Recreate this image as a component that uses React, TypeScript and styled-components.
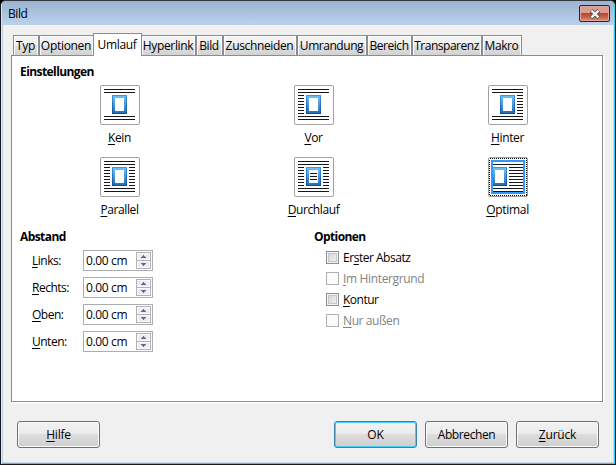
import React from 'react';
import styled, { createGlobalStyle, css } from 'styled-components';

const Global = createGlobalStyle`
  * { box-sizing: border-box; }
  html, body { margin: 0; width: 616px; height: 465px; overflow: hidden; background: #000; }
  body { font: 12px/16px "Open Sans", "Noto Sans", sans-serif; color: #000; }
  button { font: inherit; color: inherit; padding: 0; margin: 0; }
`;

const Window = styled.main`
  display: flex;
  flex-direction: column;
  width: 616px;
  height: 465px;
  border: 1px solid #17171c;
  border-top-color: #36363e;
  border-radius: 6px 6px 0 0;
  box-shadow: inset 1px 0 #d8e9fa, inset -1px -1px #30cde9, inset 2px 0 #b9d1ea, inset -2px -2px #c6dced;
  background: #f0f0f0;
  overflow: hidden;
`;
const TitleBar = styled.header`
  display: flex;
  justify-content: space-between;
  flex: none;
  height: 24px;
  padding: 4px 4px 0 7px;
  border-right: 1px solid #45cdec;
  border-left: 1px solid #d4e5f6;
  background: linear-gradient(#9ab4d2, #bbd2eb);
`;
const Title = styled.span`
  margin-left: -1px;
  letter-spacing: -0.4px;
  line-height: 17px;
`;
const CloseButton = styled.button`
  display: flex;
  align-items: center;
  justify-content: center;
  width: 31px;
  height: 17px;
  border: 1px solid #47161d;
  border-radius: 2px;
  box-shadow: inset 0 0 0 1px #dfa69c;
  background: linear-gradient(#d99d91 0 44%, #b84028 46%, #c8644a 75%, #d5947c);
`;
const Tabs = styled.nav`
  display: flex;
  align-items: flex-end;
  flex: none;
  height: 22px;
  margin: 9px 0 -1px 12px;
`;
const Tab = styled.button<{ $w: number; $ls: number; $state?: 'active' | 'before' | 'after' }>`
  flex: none;
  width: ${p => p.$w}px;
  height: 20px;
  border: 1px solid #898c95;
  border-bottom: 0;
  box-shadow: inset 1px 1px #fbfbfb, inset -1px 0 #fbfbfb;
  background: linear-gradient(#f2f2f2 0 45%, #e1e1e1 50%, #d2d2d2);
  letter-spacing: ${p => p.$ls}px;
  line-height: 19px;
  white-space: nowrap;
  padding-right: 1px;
  margin-bottom: 1px;
  ${p => p.$state === 'before' && css`border-right: 0;`}
  ${p => p.$state === 'after' && css`border-left: 0;`}
  ${p => p.$state === 'active' && css`
    z-index: 1;
    height: 23px;
    margin-bottom: 0;
    padding-bottom: 2px;
    background: #fff;
    box-shadow: none;
  `}
`;
const Panel = styled.section`
  flex: none;
  width: 592px;
  height: 347px;
  margin-left: 10px;
  padding: 8px 8px 0;
  border: 1px solid #898c95;
  box-shadow: 1px 1px #fff, 2px 2px #f8f8f8;
  background: #fff;
`;
const Heading = styled.h2<{ $ls?: number }>`
  margin: 0;
  font-size: 12px;
  line-height: 16px;
  font-weight: 700;
  letter-spacing: ${p => p.$ls ?? -0.58}px;
`;
const WrapGrid = styled.div`
  display: grid;
  grid-template-columns: repeat(3, 40px);
  column-gap: 154px;
  grid-auto-rows: 72px;
  margin: 5px 0 0 80px;
`;
const WrapChoice = styled.div`
  display: flex;
  flex-direction: column;
  align-items: center;
`;
const IconButton = styled.button`
  flex: none;
  width: 40px;
  height: 40px;
  border: 1px solid #a0a0a0;
  border-radius: 2px;
  background: #fff;
  svg { display: block; margin: -1px; }
`;
const Caption = styled.span<{ $ls: number }>`
  margin-top: 5px;
  margin-right: 1px;
  letter-spacing: ${p => p.$ls}px;
  white-space: nowrap;
`;
const Key = styled.span`
  text-decoration: underline;
  text-decoration-thickness: 1px;
  text-underline-offset: 2px;
  text-decoration-skip-ink: none;
`;
const Columns = styled.div`
  display: grid;
  grid-template-columns: 294px 1fr;
  margin-top: 0;
`;
const Fields = styled.div`
  display: grid;
  gap: 6px;
  margin: 5px 0 0 12px;
`;
const Field = styled.label`
  display: grid;
  grid-template-columns: 51px 70px;
  height: 21px;
  line-height: 21px;
`;
const FieldLabel = styled.span<{ $ls: number }>`
  letter-spacing: ${p => p.$ls}px;
`;
const Spin = styled.span`
  display: flex;
  justify-content: space-between;
  height: 21px;
  padding: 1px 1px 1px 2px;
  border: 1px solid #abadb3;
  line-height: 17px;
  letter-spacing: -0.35px;
`;
const Steps = styled.span`
  display: grid;
  grid-template-rows: 7px 7px;
  row-gap: 1px;
  width: 15px;
  height: 17px;
  border: 1px solid #b1b1b6;
  background: #b1b1b6;
`;
const Step = styled.span`
  display: flex;
  align-items: center;
  justify-content: center;
  border: 1px solid #fafafa;
  background: #ececec;
`;
const Checks = styled.div`
  display: grid;
  gap: 5px;
  margin: 5px 0 0 12px;
`;
const Check = styled.label<{ $disabled?: boolean; $ls: number }>`
  display: flex;
  gap: 4px;
  height: 16px;
  letter-spacing: ${p => p.$ls}px;
  color: ${p => (p.$disabled ? '#838383' : '#000')};
`;
const Box = styled.span<{ $disabled?: boolean }>`
  width: 13px;
  height: 13px;
  margin-top: 1px;
  border: 1px solid ${p => (p.$disabled ? '#b1b1b1' : '#8e8f8f')};
  background: ${p => (p.$disabled ? '#fbfbfb' : 'linear-gradient(135deg, #cbcfd5, #f6f6f6)')};
  box-shadow: ${p => (p.$disabled ? 'none' : 'inset 0 0 0 1px #f4f4f4, inset 0 0 0 2px #c3c7cd')};
`;
const Footer = styled.footer`
  display: flex;
  gap: 8px;
  margin: 19px 0 0 16px;
`;
const PushButton = styled.button<{ $primary?: boolean; $ls: number }>`
  width: 83px;
  height: 27px;
  border: 1px solid ${p => (p.$primary ? '#3c7fb1' : '#707070')};
  border-radius: 3px;
  box-shadow: inset 0 0 0 1px ${p => (p.$primary ? '#48d0f5' : '#fbfbfb')};
  background: linear-gradient(#f2f2f2, #ebebeb 48%, #dddddd 50%, #cfcfcf);
  letter-spacing: ${p => p.$ls}px;
  line-height: 25px;
  &:first-child { margin-right: 226px; }
`;

type Mode = 'none' | 'left' | 'right' | 'both' | 'through' | 'optimal';

function WrapIcon({ mode }: { mode: Mode }) {
  const optimal = mode === 'optimal';
  const full = mode === 'both' || mode === 'through';
  const x = optimal ? 4 : 12;
  const rows = [10, 13, 16, 19, 22, 25, 28];
  return (
    <svg width="40" height="40" shapeRendering="crispEdges">
      <defs>
        <linearGradient id={`outer-${mode}`} x1="0" y1="0" x2="0" y2="1">
          <stop stopColor="#3f97e0" />
          <stop offset="1" stopColor="#0f4d92" />
        </linearGradient>
        <linearGradient id={`inner-${mode}`} x1="0" y1="0" x2="0" y2="1">
          <stop stopColor="#6cc2f8" />
          <stop offset="1" stopColor="#2270b8" />
        </linearGradient>
      </defs>
      <g fill="#15171d">
        {(optimal ? [7, 31, 34] : [4, 7, 31, 34]).map(y => (
          <rect key={y} x="4" y={y} width="31" height="1" />
        ))}
        {(mode === 'left' || full) && rows.map(y => <rect key={`l${y}`} x="4" y={y} width="6" height="1" />)}
        {(mode === 'right' || full) && rows.map(y => <rect key={`r${y}`} x="29" y={y} width="6" height="1" />)}
        {optimal && rows.map(y => <rect key={y} x="21" y={y} width="14" height="1" />)}
      </g>
      <rect x={x} y="10" width="15" height="19" fill={`url(#outer-${mode})`} />
      <rect x={x + 1} y="11" width="13" height="17" fill={`url(#inner-${mode})`} />
      <rect x={x + 3} y="13" width="9" height="13" fill="#fff" />
      {mode === 'through' && (
        <g fill="#15171d">{[16, 19, 22].map(y => <rect key={y} x="16" y={y} width="7" height="1" />)}</g>
      )}
      {optimal && (
        <g fill="none">
          <rect x="1.5" y="1.5" width="37" height="37" stroke="#000" strokeDasharray="1 1" />
          <rect x="4" y="4" width="32" height="32" stroke="#3296fb" strokeWidth="2" />
        </g>
      )}
    </svg>
  );
}

const tabs: { text: string; w: number; ls: number; state?: 'active' | 'before' | 'after' }[] = [
  { text: 'Typ', w: 26, ls: -0.3 },
  { text: 'Optionen', w: 54, ls: -0.3, state: 'before' },
  { text: 'Umlauf', w: 49, ls: -0.35 },
  { text: 'Hyperlink', w: 54, ls: -0.35, state: 'after' },
  { text: 'Bild', w: 27, ls: -0.4 },
  { text: 'Zuschneiden', w: 74, ls: -0.35 },
  { text: 'Umrandung', w: 70, ls: -0.45 },
  { text: 'Bereich', w: 45, ls: -0.45 },
  { text: 'Transparenz', w: 70, ls: -0.48 },
  { text: 'Makro', w: 40, ls: -0.4 },
];
tabs[2].state = 'active';

const wraps: { mode: Mode; key: string; rest: string; ls: number }[] = [
  { mode: 'none', key: 'K', rest: 'ein', ls: -0.35 },
  { mode: 'left', key: 'V', rest: 'or', ls: -0.35 },
  { mode: 'right', key: 'H', rest: 'inter', ls: -0.35 },
  { mode: 'both', key: 'P', rest: 'arallel', ls: -0.4 },
  { mode: 'through', key: 'D', rest: 'urchlauf', ls: -0.4 },
  { mode: 'optimal', key: 'O', rest: 'ptimal', ls: -0.3 },
];
const distances = ['Links:', 'Rechts:', 'Oben:', 'Unten:'];

function Arrow({ down }: { down?: boolean }) {
  return (
    <svg width="5" height="3" shapeRendering="crispEdges">
      <path d={down ? 'M0 0h5v1H4v1H3v1H2V2H1V1H0z' : 'M2 0h1v1h1v1h1v1H0V2h1V1h1z'} fill="#566bb4" />
    </svg>
  );
}

export default function App() {
  return (
    <>
      <Global />
      <Window>
        <TitleBar>
          <Title>Bild</Title>
          <CloseButton aria-label="Schließen">
            <svg width="12" height="10" viewBox="0 0 12 10">
              <path d="M2.2 1.5l7.6 7m0-7l-7.6 7" stroke="#514854" strokeWidth="4" />
              <path d="M2.5 1.7l7 6.6m0-6.6l-7 6.6" stroke="#f3f3f5" strokeWidth="2.4" />
            </svg>
          </CloseButton>
        </TitleBar>
        <Tabs>
          {tabs.map(t => <Tab key={t.text} $w={t.w} $ls={t.ls} $state={t.state}>{t.text}</Tab>)}
        </Tabs>
        <Panel>
          <Heading>Einstellungen</Heading>
          <WrapGrid>
            {wraps.map(w => (
              <WrapChoice key={w.mode}>
                <IconButton><WrapIcon mode={w.mode} /></IconButton>
                <Caption $ls={w.ls}><Key>{w.key}</Key>{w.rest}</Caption>
              </WrapChoice>
            ))}
          </WrapGrid>
          <Columns>
            <div>
              <Heading>Abstand</Heading>
              <Fields>
                {distances.map(d => (
                  <Field key={d}>
                    <FieldLabel $ls={-0.5}><Key>{d[0]}</Key>{d.slice(1)}</FieldLabel>
                    <Spin>
                      0.00 cm
                      <Steps><Step><Arrow /></Step><Step><Arrow down /></Step></Steps>
                    </Spin>
                  </Field>
                ))}
              </Fields>
            </div>
            <div>
              <Heading>Optionen</Heading>
              <Checks>
                <Check $ls={-0.48}><Box /><span>Er<Key>s</Key>ter Absatz</span></Check>
                <Check $ls={-0.35} $disabled><Box $disabled /><span><Key>I</Key>m Hintergrund</span></Check>
                <Check $ls={-0.5}><Box /><span><Key>K</Key>ontur</span></Check>
                <Check $ls={-0.4} $disabled><Box $disabled /><span><Key>N</Key>ur außen</span></Check>
              </Checks>
            </div>
          </Columns>
        </Panel>
        <Footer>
          <PushButton $ls={-0.2}><Key>H</Key>ilfe</PushButton>
          <PushButton $ls={-0.2} $primary>OK</PushButton>
          <PushButton $ls={-0.4}>Abbrechen</PushButton>
          <PushButton $ls={-0.2}><Key>Z</Key>urück</PushButton>
        </Footer>
      </Window>
    </>
  );
}
